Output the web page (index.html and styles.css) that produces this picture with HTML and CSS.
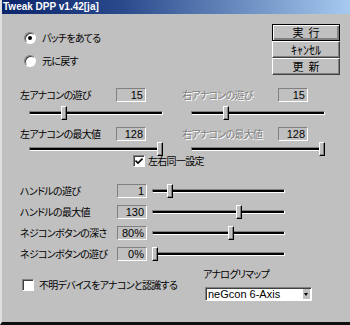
FILE: index.html
```html
<!DOCTYPE html>
<html lang="ja">

<head>
    <meta charset="UTF-8">
    <title>Tweak DPP v1.42[ja]</title>
    <link rel="stylesheet" href="styles.css">
</head>

<body>
    <div class="window">
        <div class="titlebar">Tweak DPP v1.42[ja]</div>

        <!-- Patch / restore + command buttons -->
        <div class="top">
            <div class="radios">
                <div class="radio"><span class="radio-box checked"></span>パッチをあてる</div>
                <div class="radio"><span class="radio-box"></span>元に戻す</div>
            </div>
            <div class="buttons">
                <button class="btn default">実&nbsp;&nbsp;行</button>
                <button class="btn kana">ｷｬﾝｾﾙ</button>
                <button class="btn">更&nbsp;&nbsp;新</button>
            </div>
        </div>

        <!-- Analog stick settings -->
        <div class="analog">
            <div class="col">
                <div class="field"><span class="label">左アナコンの遊び</span><span class="num">15</span></div>
                <div class="slider"><div class="track"></div><div class="thumb" style="--pos: 0.25"></div></div>
                <div class="field"><span class="label">左アナコンの最大値</span><span class="num">128</span></div>
                <div class="slider"><div class="track"></div><div class="thumb" style="--pos: 1"></div></div>
            </div>
            <div class="col disabled">
                <div class="field"><span class="label">右アナコンの遊び</span><span class="num">15</span></div>
                <div class="slider"><div class="track"></div><div class="thumb" style="--pos: 0.25"></div></div>
                <div class="field"><span class="label">右アナコンの最大値</span><span class="num">128</span></div>
                <div class="slider"><div class="track"></div><div class="thumb" style="--pos: 1"></div></div>
            </div>
        </div>

        <div class="same">
            <div class="check">
                <span class="check-box">
                    <svg width="8" height="8" viewBox="0 0 8 8"><path d="M0.5 3.5 L3 6 L7.5 1.5" fill="none" stroke="#000" stroke-width="1.6"/></svg>
                </span>左右同一設定
            </div>
        </div>

        <!-- Handle / button settings -->
        <div class="rows">
            <div class="row"><span class="label">ハンドルの遊び</span><span class="num">1</span>
                <div class="slider"><div class="track"></div><div class="thumb" style="--pos: 0.12"></div></div>
            </div>
            <div class="row"><span class="label">ハンドルの最大値</span><span class="num">130</span>
                <div class="slider"><div class="track"></div><div class="thumb" style="--pos: 0.66"></div></div>
            </div>
            <div class="row gap"><span class="label">ネジコンボタンの深さ</span><span class="num">80%</span>
                <div class="slider"><div class="track"></div><div class="thumb" style="--pos: 0.6"></div></div>
            </div>
            <div class="row"><span class="label">ネジコンボタンの遊び</span><span class="num">0%</span>
                <div class="slider"><div class="track"></div><div class="thumb" style="--pos: 0"></div></div>
            </div>
        </div>

        <div class="bottom">
            <div class="check unknown"><span class="check-box"></span>不明デバイスをアナコンと認識する</div>
            <div class="remap">
                <div class="remap-label">アナログリマップ</div>
                <div class="select">neGcon 6-Axis<span class="arrow"></span></div>
            </div>
        </div>
    </div>
</body>

</html>
```

FILE: styles.css
```css
body {
    margin: 0;
    background: #c0c0c0;
    font-family: "Noto Sans CJK JP", sans-serif;
    font-size: 10px;
    line-height: 12px;
    letter-spacing: -0.7px;
    font-feature-settings: "palt";
    color: #000;
}

.window {
    width: 350px;
    height: 325px;
    box-sizing: border-box;
    background: #c0c0c0;
    border-left: 2px solid #dfdfdf;
    border-bottom: 3px solid #101010;
    overflow: hidden;
}

.titlebar {
    height: 14px;
    margin-left: -2px;
    padding-left: 3px;
    line-height: 14px;
    font: bold 10px/14px "Liberation Sans", sans-serif;
    letter-spacing: 0;
    color: #fff;
    background: linear-gradient(90deg, #0a246a, #2a4a8c 35%, #a6caf0);
}

/* top area */
.top {
    display: flex;
    justify-content: space-between;
    padding: 10px 10px 0 22px;
}

.radios {
    padding-top: 8px;
}

.radio {
    display: flex;
    align-items: center;
    height: 12px;
}

.radio + .radio {
    margin-top: 11px;
}

.radio-box {
    width: 12px;
    height: 12px;
    box-sizing: border-box;
    margin-right: 6px;
    border-radius: 50%;
    background: #fff;
    border: 1px solid;
    border-color: #808080 #fff #fff #808080;
    box-shadow: inset 1px 1px #404040;
    position: relative;
}

.radio-box.checked::after {
    content: "";
    position: absolute;
    left: 3px;
    top: 3px;
    width: 4px;
    height: 4px;
    border-radius: 50%;
    background: #000;
}

.buttons {
    display: flex;
    flex-direction: column;
    width: 68px;
}

.btn {
    height: 17px;
    padding: 0;
    font-family: "Noto Sans CJK JP", sans-serif;
    font-size: 11px;
    font-feature-settings: "palt";
    line-height: 13px;
    color: #000;
    background: #c0c0c0;
    border: 1px solid;
    border-color: #fff #404040 #404040 #fff;
    box-shadow: inset -1px -1px #808080;
}

.btn.kana {
    font-size: 12px;
    letter-spacing: 0;
}

.btn.default {
    border: 1px solid #000;
    box-shadow: inset 1px 1px #fff, inset -2px -2px #808080, inset -1px -1px #404040;
}

/* analog stick columns */
.analog {
    display: flex;
    padding: 13px 0 0 18px;
}

.col {
    width: 162px;
}

.field {
    display: flex;
    align-items: center;
    height: 14px;
}

.label {
    width: 96px;
    white-space: nowrap;
}

.num {
    width: 30px;
    height: 14px;
    box-sizing: border-box;
    padding-right: 2px;
    text-align: right;
    font: 11px/12px "Liberation Sans", sans-serif;
    letter-spacing: 0;
    border: 1px solid;
    border-color: #808080 #fff #fff #808080;
}

.slider {
    position: relative;
    width: 134px;
    height: 14px;
    margin-left: 9px;
}

.analog .slider {
    margin-top: 4px;
    margin-bottom: 7px;
}

.analog .slider:last-child {
    margin-top: 1px;
    margin-bottom: 0;
}

.track {
    position: absolute;
    left: 0;
    right: 0;
    top: 5px;
    height: 4px;
    box-sizing: border-box;
    border: 1px solid;
    border-color: #808080 #fff #fff #808080;
    background: #000;
}

.thumb {
    position: absolute;
    top: 0;
    left: calc((100% - 6px) * var(--pos));
    width: 6px;
    height: 14px;
    box-sizing: border-box;
    background: #c0c0c0;
    border: 1px solid;
    border-color: #fff #000 #000 #fff;
    box-shadow: inset -1px -1px #808080;
}

.disabled .label {
    color: #808080;
    text-shadow: 1px 1px #fff;
}

/* checkboxes */
.same {
    padding-left: 131px;
    margin-top: -1px;
}

.check {
    display: flex;
    align-items: center;
    white-space: nowrap;
}

.check-box {
    display: flex;
    align-items: center;
    justify-content: center;
    width: 12px;
    height: 12px;
    box-sizing: border-box;
    margin-right: 3px;
    background: #fff;
    border: 1px solid;
    border-color: #808080 #fff #fff #808080;
    box-shadow: inset 1px 1px #404040;
}

/* handle rows */
.rows {
    padding: 17px 0 0 18px;
}

.row {
    display: flex;
    align-items: center;
    height: 14px;
    margin-bottom: 7px;
}

.row.gap {
    margin-top: 4px;
}

.row .label {
    width: 97px;
}

.row .slider {
    width: 133px;
    margin-left: 5px;
}

/* bottom */
.bottom {
    display: flex;
    padding: 0 0 0 20px;
    margin-top: -1px;
}

.check.unknown {
    margin-top: 12px;
    width: 181px;
    align-self: flex-start;
}

.check.unknown .check-box {
    margin-right: 5px;
}

.remap-label {
    height: 14px;
    line-height: 14px;
    margin-bottom: 6px;
}

.select {
    position: relative;
    width: 107px;
    height: 14px;
    box-sizing: border-box;
    margin-left: 2px;
    padding-left: 2px;
    font: 11px/12px "Liberation Sans", sans-serif;
    letter-spacing: 0;
    background: #fff;
    border: 1px solid;
    border-color: #808080 #fff #fff #808080;
    box-shadow: inset 1px 1px #404040;
}

.arrow {
    position: absolute;
    right: 1px;
    top: 1px;
    width: 7px;
    height: 10px;
    background: #c0c0c0;
    border-left: 1px solid #fff;
}

.arrow::after {
    content: "";
    position: absolute;
    left: 1px;
    top: 4px;
    border: 2px solid transparent;
    border-top: 3px solid #000;
    border-bottom: none;
}
```
